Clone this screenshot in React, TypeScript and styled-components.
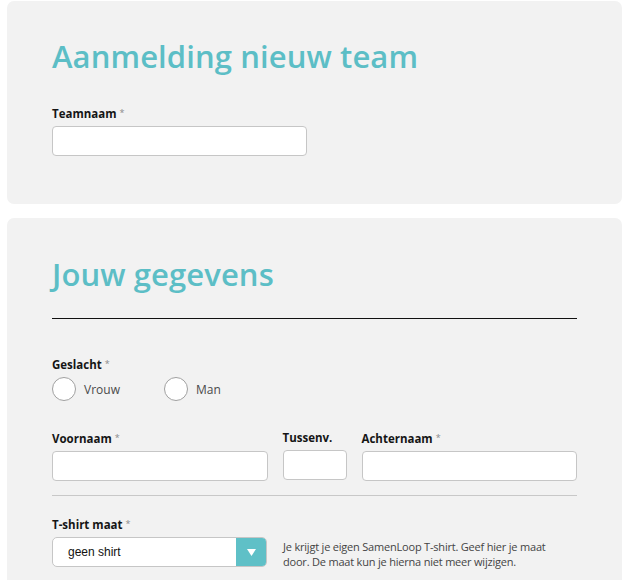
import React from "react";
import styled, { createGlobalStyle } from "styled-components";

const Global = createGlobalStyle`
  html, body { margin: 0; padding: 0; background: #ffffff; }
  body { font-family: "Open Sans", "Noto Sans", sans-serif; color: #222; }
  * { box-sizing: border-box; }
`;

const Page = styled.div`
  display: flex;
  flex-direction: column;
  gap: 14px;
  padding: 1px 12px 0 7px;
`;

const Card = styled.section<{ $pt: number; $pb: number }>`
  background: #f2f2f2;
  border-radius: 7px;
  padding: ${(p) => p.$pt}px 45px ${(p) => p.$pb}px;
`;

const Title = styled.h1`
  margin: 0;
  font-size: 31px;
  line-height: 37px;
  font-weight: 600;
  color: #5cbec6;
  letter-spacing: 0.1px;
`;

const BlackRule = styled.hr`
  margin: 25px 0 37px;
  border: 0;
  border-top: 1px solid #111;
  height: 0;
`;

const GrayRule = styled.hr`
  margin: 14px 0 20px;
  border: 0;
  border-top: 1px solid #c8c8c8;
  height: 0;
`;

const Field = styled.div`
  display: flex;
  flex-direction: column;
  gap: 4px;
`;

const Label = styled.label`
  font-size: 11.5px;
  line-height: 16px;
  font-weight: 700;
  color: #151515;
`;

const Req = styled.span`
  font-size: 9px;
  font-weight: 400;
  color: #8a8a8a;
  margin-left: 3px;
  vertical-align: 2px;
`;

const Input = styled.input`
  height: 30px;
  width: 100%;
  border: 1px solid #c6c6c6;
  border-radius: 4px;
  background: #fff;
  padding: 0 8px;
  font: inherit;
`;

const TwoCols = styled.div`
  display: grid;
  grid-template-columns: 1fr 1fr;
  gap: 15px;
  margin-top: 30px;
`;

const NameRow = styled.div`
  display: grid;
  grid-template-columns: 1fr 64px 1fr;
  gap: 15px;
  margin-top: 29px;
`;

const RadioGroup = styled.div`
  display: flex;
`;

const RadioOption = styled.label`
  display: flex;
  align-items: center;
  gap: 8px;
  width: 112px;
  font-size: 12px;
  color: #4a4a4a;
`;

const Circle = styled.span`
  width: 24px;
  height: 24px;
  border-radius: 50%;
  border: 1px solid #a0a0a0;
  background: #fff;
  flex: none;
`;

const ShirtRow = styled.div`
  display: grid;
  grid-template-columns: 215px 1fr;
  column-gap: 16px;
  align-items: start;
`;

const Select = styled.div`
  height: 30px;
  display: flex;
  border: 1px solid #c6c6c6;
  border-radius: 5px;
  background: #fff;
  overflow: hidden;
`;

const SelectValue = styled.span`
  flex: 1;
  padding-left: 15px;
  font-family: "Liberation Sans", Arial, sans-serif;
  font-size: 12px;
  line-height: 28px;
  color: #111;
`;

const SelectButton = styled.span`
  width: 31px;
  margin: -1px -1px -1px 0;
  background: #5fc0c7;
  display: flex;
  align-items: center;
  justify-content: center;
`;

const Help = styled.p`
  margin: 2px 0 0;
  font-size: 11px;
  line-height: 15px;
  color: #444;
  letter-spacing: -0.2px;
`;

export default function App() {
  return (
    <>
      <Global />
      <Page>
        <Card $pt={37} $pb={48}>
          <Title>Aanmelding nieuw team</Title>
          <TwoCols>
            <Field>
              <Label>
                Teamnaam<Req>*</Req>
              </Label>
              <Input />
            </Field>
          </TwoCols>
        </Card>
        <Card $pt={38} $pb={40}>
          <Title as="h2">Jouw gegevens</Title>
          <BlackRule />
          <Field>
            <Label>
              Geslacht<Req>*</Req>
            </Label>
            <RadioGroup>
              <RadioOption>
                <Circle />
                Vrouw
              </RadioOption>
              <RadioOption>
                <Circle />
                Man
              </RadioOption>
            </RadioGroup>
          </Field>
          <NameRow>
            <Field>
              <Label>
                Voornaam<Req>*</Req>
              </Label>
              <Input />
            </Field>
            <Field>
              <Label>Tussenv.</Label>
              <Input />
            </Field>
            <Field>
              <Label>
                Achternaam<Req>*</Req>
              </Label>
              <Input />
            </Field>
          </NameRow>
          <GrayRule />
          <Field>
            <Label>
              T-shirt maat<Req>*</Req>
            </Label>
            <ShirtRow>
              <Select>
                <SelectValue>geen shirt</SelectValue>
                <SelectButton>
                  <svg width="9" height="7" viewBox="0 0 9 7">
                    <path d="M0 0 H9 L4.5 7 Z" fill="#fff" />
                  </svg>
                </SelectButton>
              </Select>
              <Help>
                Je krijgt je eigen SamenLoop T-shirt. Geef hier je maat
                <br />
                door. De maat kun je hierna niet meer wijzigen.
              </Help>
            </ShirtRow>
          </Field>
        </Card>
      </Page>
    </>
  );
}
